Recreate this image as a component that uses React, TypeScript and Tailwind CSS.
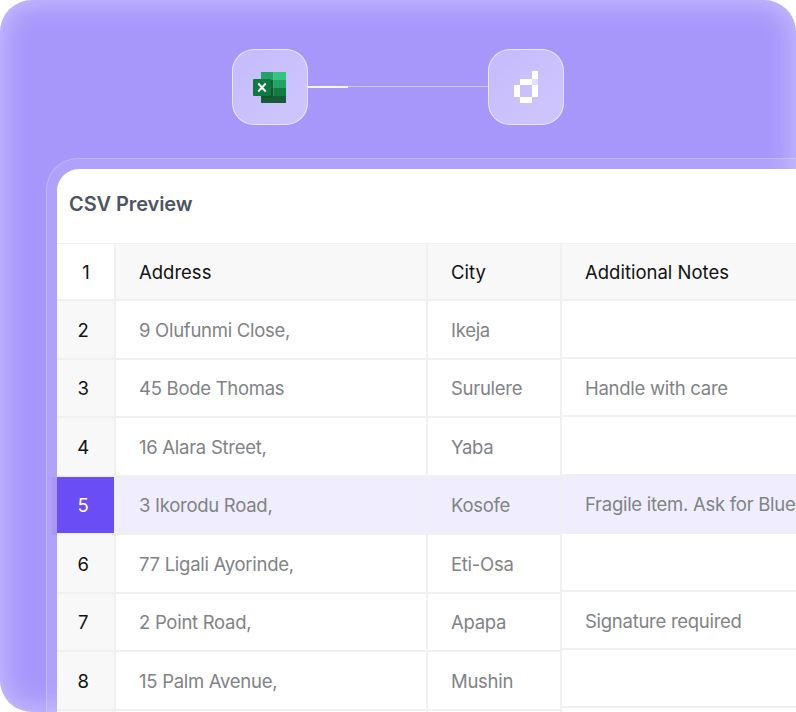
const rows = [
    { n: "2", address: "9 Olufunmi Close,", city: "Ikeja", notes: "" },
    { n: "3", address: "45 Bode Thomas", city: "Surulere", notes: "Handle with care" },
    { n: "4", address: "16 Alara Street,", city: "Yaba", notes: "" },
    { n: "5", address: "3 Ikorodu Road,", city: "Kosofe", notes: "Fragile item. Ask for Blue", active: true },
    { n: "6", address: "77 Ligali Ayorinde,", city: "Eti-Osa", notes: "" },
    { n: "7", address: "2 Point Road,", city: "Apapa", notes: "Signature required" },
    { n: "8", address: "15 Palm Avenue,", city: "Mushin", notes: "" },
    { n: "", address: "", city: "", notes: "" },
];

const ExcelIcon = () => (
    <svg width="33" height="31" viewBox="0 0 33 31">
        <rect x="8" y="0" width="12.5" height="8" fill="#21a366" />
        <rect x="20.5" y="0" width="12.5" height="8" fill="#33c481" />
        <rect x="8" y="8" width="12.5" height="8" fill="#107c41" />
        <rect x="20.5" y="8" width="12.5" height="8" fill="#21a366" />
        <rect x="8" y="16" width="12.5" height="8" fill="#185c37" />
        <rect x="20.5" y="16" width="12.5" height="8" fill="#107c41" />
        <rect x="8" y="24" width="25" height="7" fill="#185c37" />
        <rect x="8" y="8" width="12" height="18" fill="#0b4f2a" opacity="0.5" />
        <rect x="0" y="7" width="18" height="17" rx="1" fill="#0f7a40" />
        <path d="M5.3 11.5 L12.7 19.5 M12.7 11.5 L5.3 19.5" stroke="#fff" strokeWidth="1.9" />
    </svg>
);

const PixelLogo = () => (
    <svg width="24" height="32" viewBox="0 0 24 32">
        <rect x="18" y="0" width="6" height="8" fill="#fff" />
        <rect x="18" y="8" width="6" height="6" fill="#fff" opacity="0.45" />
        <rect x="6" y="8" width="12" height="6" fill="#fff" />
        <rect x="0" y="14" width="6" height="12" fill="#fff" />
        <rect x="18" y="14" width="6" height="12" fill="#fff" />
        <rect x="6" y="26" width="12" height="6" fill="#fff" />
    </svg>
);

const IconTile = ({ children }: { children: React.ReactNode }) => (
    <div className="flex h-[76px] w-[76px] shrink-0 items-center justify-center rounded-[22px] border border-white/60 bg-gradient-to-br from-white/35 to-white/45">
        {children}
    </div>
);

const Cell = ({ children, className }: { children?: React.ReactNode; className: string }) => (
    <div className={`flex h-[58.5px] shrink-0 items-center border-b-2 border-[#f0f0f0] pt-[3px] ${className}`}>
        {children}
    </div>
);

const HeadCell = ({ children, className }: { children: React.ReactNode; className: string }) => (
    <div className={`flex h-[58px] shrink-0 items-center border-t border-b-2 border-[#f0f0f0] pt-[3px] text-[18.5px] tracking-normal text-[#111111] ${className}`}>
        {children}
    </div>
);

export default function App() {
    return (
        <div className="h-[712px] w-[796px] overflow-hidden bg-white font-['Inter',sans-serif]">
            <div className="h-[712px] w-[796px] overflow-hidden rounded-[32px] rounded-br-none bg-[#a897fb] pt-[49px] pl-[46px] shadow-[inset_0_0_30px_rgba(255,255,255,0.45)]">
                <div className="ml-[186px] flex w-[332px] items-center">
                    <IconTile><span className="pr-[1px]"><ExcelIcon /></span></IconTile>
                    <div className="mb-[1px] h-[1px] flex-1 bg-white/45">
                        <div className="h-[2px] w-10 bg-white/90" />
                    </div>
                    <IconTile><PixelLogo /></IconTile>
                </div>

                <div className="mt-[33px] w-[800px] rounded-tl-[32px] border border-white/20 bg-white/10 pt-[10px] pl-[10px]">
                    <div className="relative rounded-tl-[22px] bg-white">
                        <div className="flex h-[74px] items-center pb-[5px] pl-3 text-[20px] leading-7 font-semibold tracking-[-0.005em] text-[#4b5563]">
                            CSV Preview
                        </div>
                        <div className="flex text-[18.5px] tracking-[-0.015em] text-[#7f8385]">
                            <div className="flex w-[59px] shrink-0 flex-col">
                                <HeadCell className="justify-center border-r-2 pl-[1px]">1</HeadCell>
                                {rows.map((row) => (
                                    <Cell
                                        key={row.n || "empty"}
                                        className={`justify-center border-r-2 pr-[5px] ${row.active ? "relative border-[#8f7af6] bg-[#6a4df4] text-white" : "bg-[#f8f8f8] text-[#111111]"}`}
                                    >
                                        {row.n}
                                        {row.active && <span className="absolute top-0 right-full h-[58px] w-[5px] bg-[#6a4df4]/10" />}
                                    </Cell>
                                ))}
                            </div>
                            <div className="flex w-[312px] shrink-0 flex-col">
                                <HeadCell className="border-r-2 bg-[#f8f8f8] pl-[23px]">Address</HeadCell>
                                {rows.map((row) => (
                                    <Cell key={row.n || "empty"} className={`border-r-2 pl-[23px] ${row.active ? "bg-[#f0eefe]" : ""}`}>{row.address}</Cell>
                                ))}
                            </div>
                            <div className="flex w-[134px] shrink-0 flex-col">
                                <HeadCell className="border-r-2 bg-[#f8f8f8] pl-[23px]">City</HeadCell>
                                {rows.map((row) => (
                                    <Cell key={row.n || "empty"} className={`border-r-2 pl-[23px] ${row.active ? "bg-[#f0eefe]" : ""}`}>{row.city}</Cell>
                                ))}
                            </div>
                            <div className="flex flex-1 flex-col">
                                <HeadCell className="bg-[#f8f8f8] pl-[23px]">Additional Notes</HeadCell>
                                <div className="flex flex-col">
                                    {rows.map((row) => (
                                        <div
                                            key={row.n || "empty"}
                                            className={`flex h-[58.2px] shrink-0 items-center border-b-2 border-[#f0f0f0] pl-[23px] pt-[3px] whitespace-nowrap ${row.active ? "bg-[#f0eefe]" : ""}`}
                                        >
                                            {row.notes}
                                        </div>
                                    ))}
                                </div>
                            </div>
                        </div>
                    </div>
                </div>
            </div>
        </div>
    );
}
